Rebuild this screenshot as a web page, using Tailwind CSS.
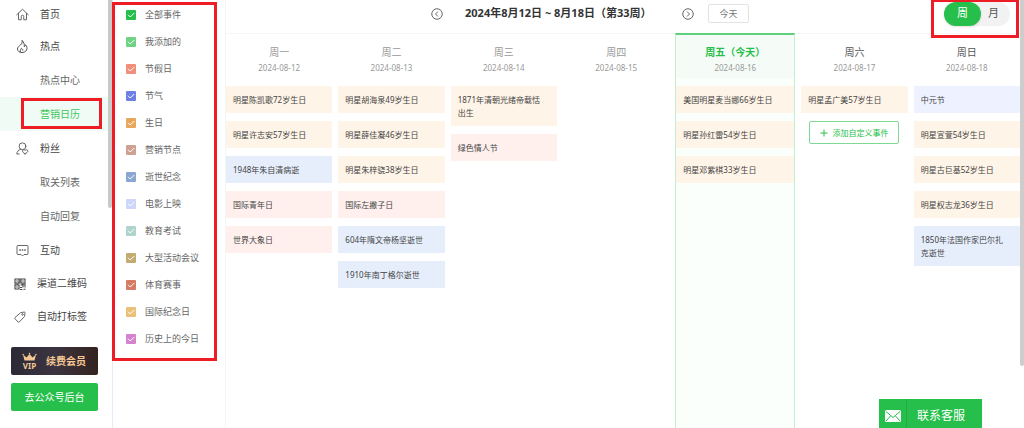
<!DOCTYPE html>
<html lang="zh-CN">
<head>
<meta charset="utf-8">
<title>营销日历</title>
<script src="https://cdn.jsdelivr.net/npm/@tailwindcss/browser@4"></script>
</head>
<body class="relative flex h-screen overflow-hidden bg-white font-['Noto_Sans','Noto_Sans_CJK_SC',sans-serif] text-[10px] text-[#666]">

<!-- Main navigation -->
<aside class="relative flex w-[113px] shrink-0 flex-col border-r border-[#e6ecf6]">
  <nav class="flex flex-col text-[#444]">
    <a href="#" class="flex h-[29px] items-center gap-[11px] pl-4">
      <svg class="size-[13px]" viewBox="0 0 26 26" fill="none" stroke="#555" stroke-width="1.8" stroke-linejoin="round" stroke-linecap="round"><path d="M1.500 13.500 13 2.500l11.500 11M5 11v12.500h5.500v-6.500a2.500 2.500 0 0 1 5 0v6.500H21V11"/></svg>
      首页</a>
    <a href="#" class="flex h-[34px] items-center gap-[11px] pl-4">
      <svg class="size-[13px]" viewBox="0 0 26 26" fill="none" stroke="#555" stroke-width="2" stroke-linejoin="round" stroke-linecap="round"><path d="M12.500 1.500c.5 4-1 6-3.500 8.500C6 12.500 3 14 3 18c0 4.500 4 7 9 7 6 0 10-3.500 10-8.500 0-3-1.500-5-3-7 0 2-1 3.500-2.500 4C17 9 16 4.500 12.500 1.500z"/><path d="M9 24c-1.500-3 0-5 2-7.500 1.500 1 2.500 2 2.700 4"/></svg>
      热点</a>
    <a href="#" class="flex h-[34px] items-center pl-10 text-[#666]">热点中心</a>
    <a href="#" class="mr-1 flex h-[34px] items-center bg-[#f1fbf5] pl-10 text-[#3cc65c]">营销日历</a>
    <a href="#" class="flex h-[34px] items-center gap-[11px] pl-4">
      <svg class="size-[13px]" viewBox="0 0 26 26" fill="none" stroke="#555" stroke-width="1.8" stroke-linejoin="round" stroke-linecap="round"><circle cx="13" cy="8.500" r="6.800"/><path d="M9 14.500c-4.500 1.500-7 5-7.500 9.500h5"/><path d="M18 23.500c-3-1.500-5-3.500-5-5.500 0-2.500 3.500-3.500 5-1 1.500-2.500 6-1.500 6 1 0 2-3 4-6 5.500z"/></svg>
      粉丝</a>
    <a href="#" class="flex h-[34px] items-center pl-10 text-[#666]">取关列表</a>
    <a href="#" class="flex h-[34px] items-center pl-10 text-[#666]">自动回复</a>
    <a href="#" class="flex h-[34px] items-center gap-[11px] pl-4">
      <svg class="size-[13px]" viewBox="0 0 26 26" fill="none" stroke="#555" stroke-width="1.8" stroke-linejoin="round"><path d="M4 3h18q2 0 2 2v14q0 2-2 2h-6l-3 3-3-3H4q-2 0-2-2V5q0-2 2-2z"/><path d="M6.500 12h3M11.500 12h3M16.500 12h3" stroke-width="2.800"/></svg>
      互动</a>
    <a href="#" class="flex h-[33px] items-center gap-[11px] pl-[14px]">
      <svg class="size-3" viewBox="0 0 24 24" fill="none" stroke="#444" stroke-width="2.200"><path d="M2 2h8v8H2zM14 2h8v8h-8zM2 14h8v8H2z"/><path d="M4.500 6h3M16.500 6h3M4.500 18h3M13 14h5v5M12 19h4M12 23h5M22 13v6M19 22.500h4M12 1v10M1 12h9M15 12h8"/></svg>
      渠道二维码</a>
    <a href="#" class="flex h-[33px] items-center gap-[11px] pl-[14px]">
      <svg class="size-3" viewBox="0 0 24 24" fill="none" stroke="#555" stroke-width="1.800" stroke-linejoin="round"><path d="M13 3.500 20.500 2q1.500 0 1.500 1.500L21 11 10.500 22q-1.200 1-2.400 0L2 15.500q-1-1.200 0-2.400z"/><circle cx="17" cy="7" r="1.500"/></svg>
      自动打标签</a>
  </nav>
  <div class="mt-[14px] flex flex-col gap-2 pr-[14px] pl-[11px]">
    <button type="button" class="flex h-7 items-center gap-[9px] rounded-xs bg-linear-to-r from-[#2c2a37] via-[#3b3440] to-[#33231f] pl-[11px] font-bold text-[#f4c793]">
      <svg class="h-4 w-[15px] overflow-visible" viewBox="0 0 30 32" fill="#f4c793"><path d="M2 3l7 6 6-7 6 7 7-6-3 12H5z"/><circle cx="2" cy="3" r="1.500"/><circle cx="15" cy="1" r="1.500"/><circle cx="28" cy="3" r="1.500"/><text x="15" y="31" text-anchor="middle" font-size="16" font-weight="700">VIP</text></svg>
      续费会员</button>
    <button type="button" class="h-7 rounded-xs bg-[#26bf4b] text-white">去公众号后台</button>
  </div>
  <div class="absolute top-0 right-0 h-[208px] w-1 rounded-b-xs bg-[#c9c9c9]"></div>
  <div class="absolute top-[98px] left-[21px] h-[31px] w-[81px] border-3 border-[#ee1c24]"></div>
</aside>

<!-- Event type filters -->
<section class="relative w-[113px] shrink-0 border-r border-[#f4f5f7] pt-px text-[9px] text-[#666]">
  <form id="filters" class="flex flex-col pl-[13px]"></form>
  <div class="absolute top-[2px] -left-px h-[359px] w-[105px] border-3 border-[#ee1c24]"></div>
</section>

<!-- Calendar -->
<main class="relative flex min-w-0 flex-1 flex-col pr-1">
  <header class="relative flex h-[33px] shrink-0 items-center pb-[6px] pl-[205px]">
    <button type="button" aria-label="上一周"><svg class="block size-3" viewBox="0 0 24 24" fill="none" stroke="#555" stroke-width="1.800"><circle cx="12" cy="12" r="10.500"/><path d="M14 7l-5 5 5 5"/></svg></button>
    <h1 class="w-[239px] pl-[22px] text-[11px] font-bold whitespace-nowrap text-[#333]">2024年8月12日 ~ 8月18日（第33周）</h1>
    <button type="button" aria-label="下一周"><svg class="block size-3" viewBox="0 0 24 24" fill="none" stroke="#555" stroke-width="1.800"><circle cx="12" cy="12" r="10.500"/><path d="M10 7l5 5-5 5"/></svg></button>
    <button type="button" class="ml-[14px] h-[19px] w-[41px] rounded-xs border border-[#e2e2e2] text-[9px] text-[#777]">今天</button>
    <div class="mr-[10px] ml-auto flex h-6 w-[66px] rounded-full bg-[#f2f2f2] text-[11px]">
      <button type="button" class="w-[37px] rounded-full bg-[#26bf4b] text-white shadow-sm">周</button>
      <button type="button" class="flex-1 pr-1 text-[#555]">月</button>
    </div>
    <div class="absolute -top-px right-[1px] h-[39px] w-[88px] border-3 border-[#ee1c24]"></div>
  </header>
  <div id="week" class="grid flex-1 grid-cols-[repeat(4,minmax(0,1fr))_120px_repeat(2,minmax(0,1fr))] gap-x-[6px] border-t border-[#f5f5f5] text-[8px] leading-[13px]"></div>
  <div class="absolute top-0 right-0 h-[366px] w-1 rounded-b-xs bg-[#cdcdcd]"></div>
</main>

<a href="#" class="absolute right-[42px] bottom-0 flex h-[29px] w-[103px] items-center bg-[#26bf4b] text-xs text-white">
  <span class="flex h-full w-7 items-center justify-center border-r border-[#22ab43] pt-1"><svg class="h-3 w-4" viewBox="0 0 32 24"><rect width="32" height="24" rx="3" fill="#fff"/><path d="M2 3l14 12L30 3M2 22l9-10M30 22l-9-10" fill="none" stroke="#26bf4b" stroke-width="2"/></svg></span>
  <span class="pt-1 pl-[10px]">联系客服</span>
</a>

<script>
const filters = [
  ['全部事件', 'bg-[#26bf4b]'], ['我添加的', 'bg-[#6fd386]'], ['节假日', 'bg-[#f0907a]'], ['节气', 'bg-[#6d80e6]'],
  ['生日', 'bg-[#e8a75c]'], ['营销节点', 'bg-[#cfa192]'], ['逝世纪念', 'bg-[#8aa6d2]'], ['电影上映', 'bg-[#cdd6fa]'],
  ['教育考试', 'bg-[#b0d3cc]'], ['大型活动会议', 'bg-[#c3ac72]'], ['体育赛事', 'bg-[#d67c65]'], ['国际纪念日', 'bg-[#ebc078]'],
  ['历史上的今日', 'bg-[#d583cf]'],
];
document.getElementById('filters').innerHTML = filters.map(([name, color]) => `
  <label class="flex h-[27px] items-center gap-[9px]">
    <span class="grid size-[10px]">
      <input type="checkbox" checked class="col-start-1 row-start-1 size-[10px] appearance-none rounded-[1px] ${color}">
      <svg class="pointer-events-none col-start-1 row-start-1 size-[10px]" viewBox="0 0 20 20" fill="none" stroke="#fff" stroke-width="2"><path d="M4 9.500l4.500 4.500L16.500 6"/></svg>
    </span>${name}</label>`).join('');

const tones = { birth: 'bg-[#fff4e8]', death: 'bg-[#e6eefc]', day: 'bg-[#fff0ee]', term: 'bg-[#eef1ff]' };
const days = [
  { name: '周一', date: '2024-08-12', events: [['明星陈凯歌72岁生日', 'birth'], ['明星许志安57岁生日', 'birth'], ['1948年朱自清病逝', 'death'], ['国际青年日', 'day'], ['世界大象日', 'day']] },
  { name: '周二', date: '2024-08-13', events: [['明星胡海泉49岁生日', 'birth'], ['明星薛佳凝46岁生日', 'birth'], ['明星朱梓骁38岁生日', 'birth'], ['国际左撇子日', 'day'], ['604年隋文帝杨坚逝世', 'death'], ['1910年南丁格尔逝世', 'death']] },
  { name: '周三', date: '2024-08-14', events: [['1871年清朝光绪帝载恬出生', 'birth'], ['绿色情人节', 'day']] },
  { name: '周四', date: '2024-08-15', events: [] },
  { name: '周五（今天）', date: '2024-08-16', today: true, events: [['美国明星麦当娜66岁生日', 'birth'], ['明星孙红雷54岁生日', 'birth'], ['明星邓紫棋33岁生日', 'birth']] },
  { name: '周六', date: '2024-08-17', next: true, add: true, events: [['明星孟广美57岁生日', 'birth']] },
  { name: '周日', date: '2024-08-18', next: true, events: [['中元节', 'term'], ['明星宣萱54岁生日', 'birth'], ['明星古巨基52岁生日', 'birth'], ['明星权志龙36岁生日', 'birth'], ['1850年法国作家巴尔扎克逝世', 'death']] },
];
document.getElementById('week').innerHTML = days.map(d => `
  <section class="${d.today ? '-mt-px border-x border-t-2 border-x-[#c3efcd] border-t-[#5fd07c] bg-[#fafffb]' : ''}">
    <div class="flex flex-col items-center ${d.today ? 'h-[43px] bg-[#f5fcf8] pt-[9px]' : 'h-11 pt-[10px]'}">
      <h2 class="text-[10px] leading-4 ${d.today ? 'font-bold text-[#26bf4b]' : d.next ? 'text-[#555]' : 'text-[#999]'}">${d.name}</h2>
      <time class="leading-4 text-[#999]">${d.date}</time>
    </div>
    <ul class="mt-2 flex flex-col gap-2 text-[#444]">
      ${d.events.map(([t, k]) => `<li class="py-[7px] pr-3 pl-[7px] ${tones[k]}">${t}</li>`).join('')}
    </ul>
    ${d.add ? '<button type="button" class="mx-auto mt-2 flex h-[23px] w-[90px] items-center justify-center gap-1 rounded-xs border border-[#7fd995] text-[8px] text-[#26bf4b]"><svg class="size-2" viewBox="0 0 16 16" stroke="#26bf4b" stroke-width="2"><path d="M8 1v14M1 8h14"/></svg>添加自定义事件</button>' : ''}
  </section>`).join('');
</script>
</body>
</html>
